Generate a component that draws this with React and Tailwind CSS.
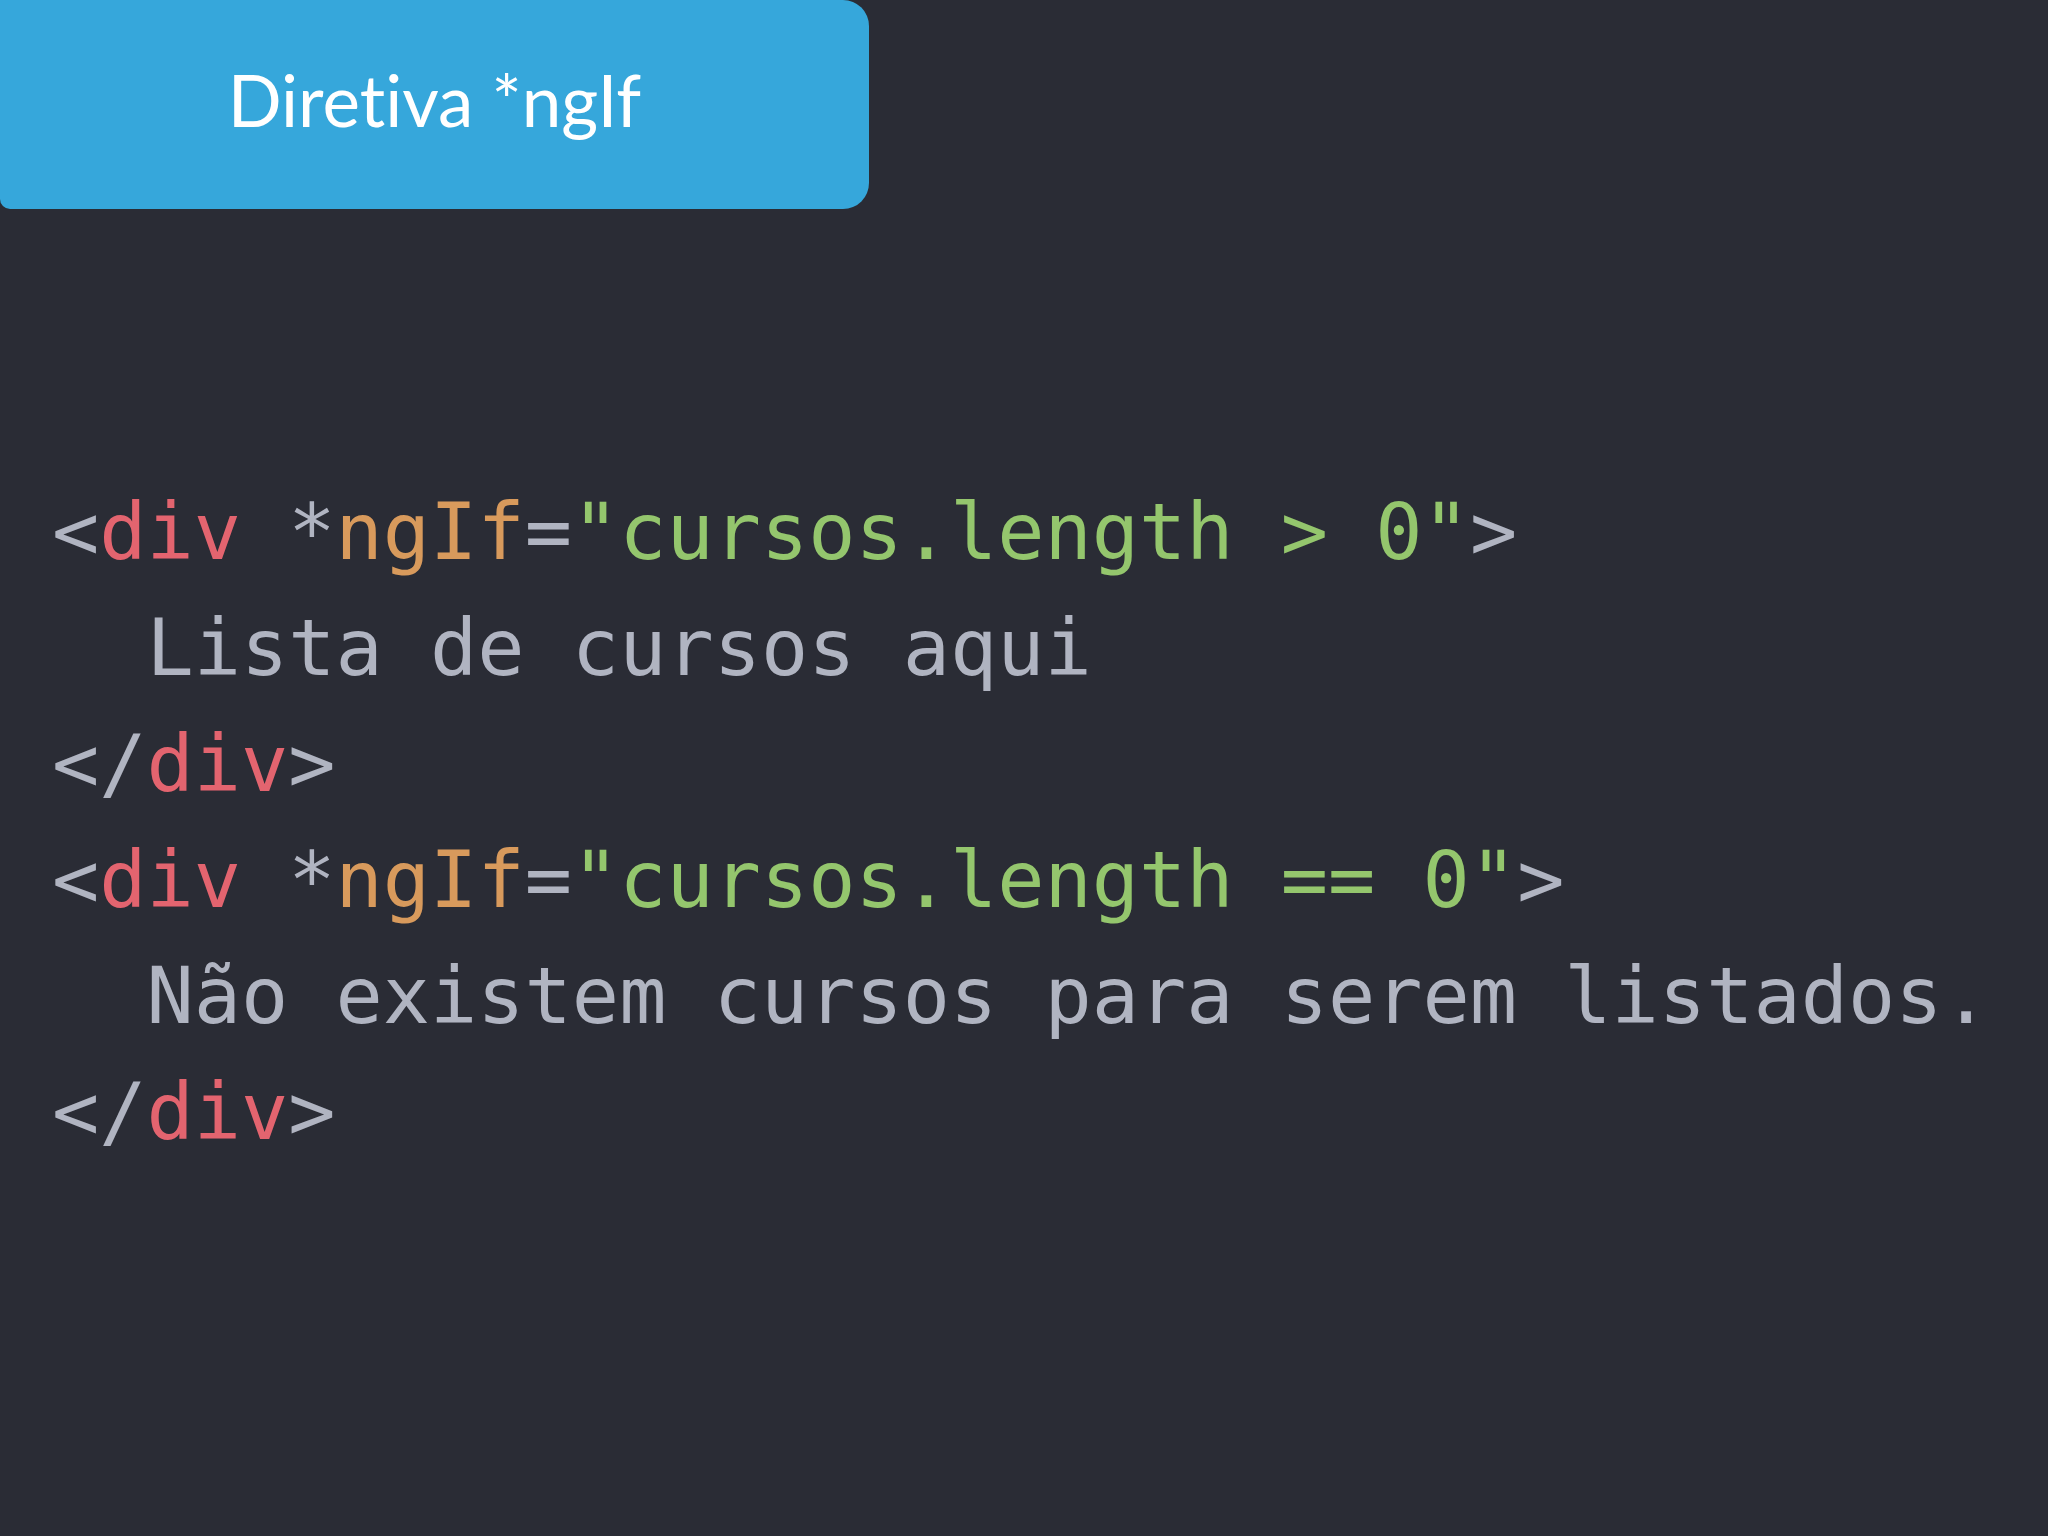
import React from "react";

const lines = [
  [["<", "p"], ["div", "r"], [" *", "p"], ["ngIf", "o"], ["=", "p"], ['"cursos.length > 0"', "g"], [">", "p"]],
  [["  Lista de cursos aqui", "p"]],
  [["</", "p"], ["div", "r"], [">", "p"]],
  [["<", "p"], ["div", "r"], [" *", "p"], ["ngIf", "o"], ["=", "p"], ['"cursos.length == 0"', "g"], [">", "p"]],
  [["  Não existem cursos para serem listados.", "p"]],
  [["</", "p"], ["div", "r"], [">", "p"]],
];

const colors = {
  p: "text-[#b0b4c1]",
  r: "text-[#e3646f]",
  o: "text-[#d89a5c]",
  g: "text-[#94c66d]",
};

export default function App() {
  return (
    <div className="w-[2048px] h-[1536px] bg-[#2a2c35] overflow-hidden">
      <div className="w-[869px] h-[209px] bg-[#36a7db] rounded-tr-[26px] rounded-br-[26px] rounded-bl-[10px] flex items-center justify-center pb-[10px]">
        <span className="text-white text-[71px] font-['Lato',sans-serif] leading-none [font-variant-ligatures:none]">Diretiva *ngIf</span>
      </div>
      <div className="mt-[265px] pl-[52px] font-['DejaVu_Sans_Mono',monospace] text-[78.5px] leading-[116px] whitespace-pre">
        {lines.map((line, i) => (
          <div key={i}>
            {line.map(([t, c], j) => (
              <span key={j} className={colors[c]}>{t}</span>
            ))}
          </div>
        ))}
      </div>
    </div>
  );
}
